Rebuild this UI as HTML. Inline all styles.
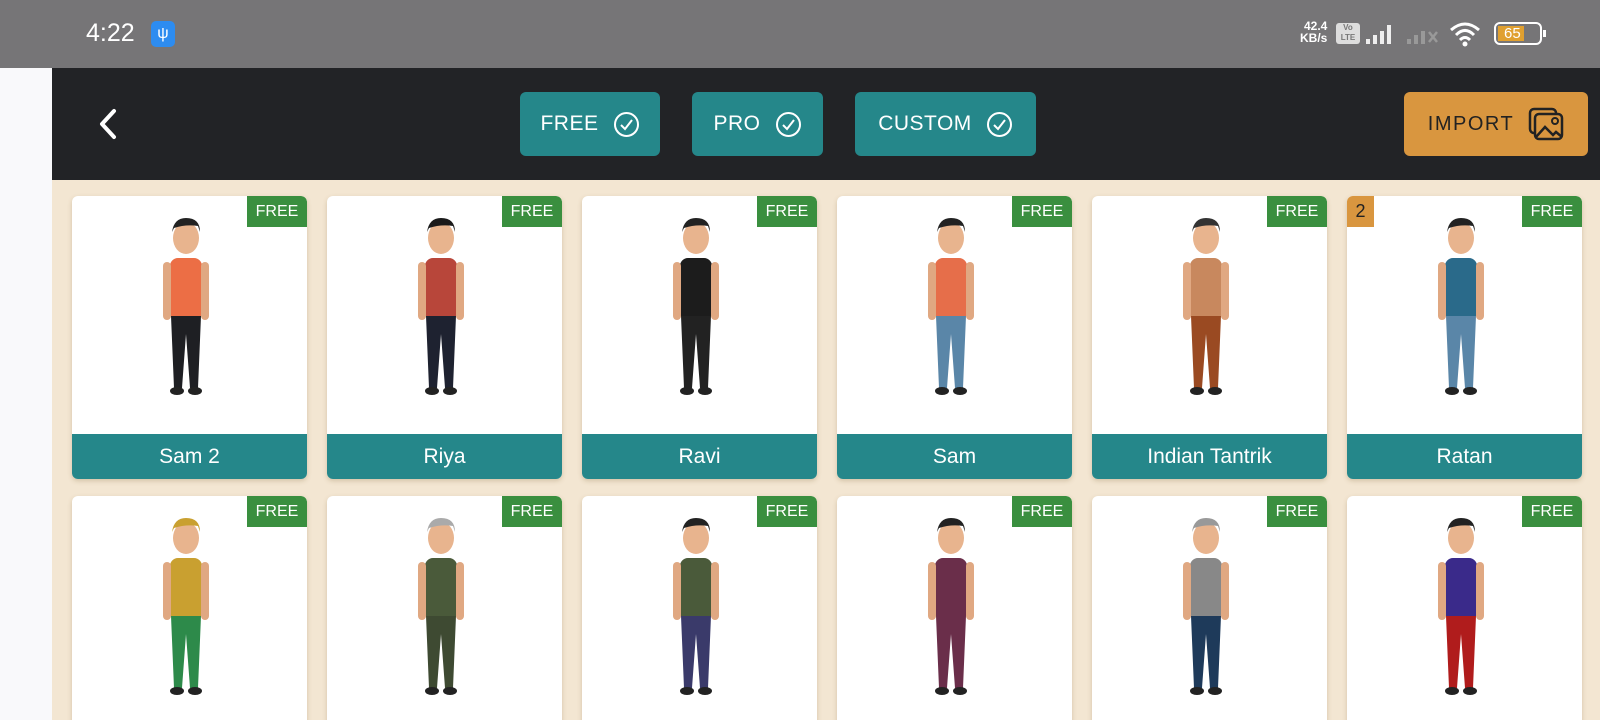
<!DOCTYPE html>
<html><head><meta charset="utf-8"><style>
*{margin:0;padding:0;box-sizing:border-box}
html,body{width:1600px;height:720px;overflow:hidden}
body{background:#f3e6d2;font-family:"Liberation Sans",Roboto,sans-serif;position:relative}
.sb{position:absolute;left:0;top:0;width:1600px;height:68px;background:#767577;color:#fff}
.left{position:absolute;left:0;top:68px;width:52px;height:652px;background:#f9f9fb}
.hdr{position:absolute;left:52px;top:68px;width:1548px;height:112px;background:#222326}
.btn{position:absolute;top:92px;height:64px;background:#25878a;border-radius:6px;color:#fff;font-size:21px;display:flex;align-items:center;justify-content:center;gap:14px;letter-spacing:.5px}
.imp{position:absolute;left:1404px;top:92px;width:184px;height:64px;background:#d9963f;border-radius:6px;color:#222;font-size:20px;display:flex;align-items:center;justify-content:center;gap:14px;letter-spacing:1.5px}
.card{position:absolute;width:235px;height:283px;background:#fff;border-radius:6px;box-shadow:0 2px 5px rgba(120,90,40,.25);overflow:hidden}
.card .nm{position:absolute;left:0;bottom:0;width:100%;height:45px;background:#25878a;color:#fff;font-size:21px;text-align:center;line-height:45px}
.card .fr{position:absolute;right:0;top:0;width:60px;height:31px;background:#3a8f3f;color:#fff;font-size:16px;text-align:center;line-height:31px;border-top-right-radius:6px}
.card .n2{position:absolute;left:0;top:0;width:27px;height:31px;background:#d9963f;color:#222;font-size:18px;text-align:center;line-height:31px}
.card svg{position:absolute;left:74px;top:14px}
</style></head><body>
<svg width="0" height="0" style="position:absolute"><defs>
<g id="fig">
<ellipse cx="40" cy="28" rx="13" ry="16" fill="#e8b48e"/>
<path d="M26 22 Q28 8 40 8 Q54 8 54 22 L52 16 Q40 14 28 18Z" fill="var(--hair)"/>
<rect x="24" y="48" width="32" height="62" rx="8" fill="var(--shirt)"/>
<rect x="17" y="52" width="8" height="58" rx="4" fill="#e0a882"/>
<rect x="55" y="52" width="8" height="58" rx="4" fill="#e0a882"/>
<path d="M25 106 L55 106 L52 178 L44 178 L40 124 L36 178 L28 178Z" fill="var(--pant)"/>
<ellipse cx="31" cy="181" rx="7" ry="4" fill="#222"/>
<ellipse cx="49" cy="181" rx="7" ry="4" fill="#222"/>
</g></defs></svg>
<div class="sb">
<div style="position:absolute;left:86px;top:19px;font-size:25px">4:22</div>
<div style="position:absolute;left:151px;top:21px;width:24px;height:26px;background:#2d8cf0;border-radius:5px;color:#fff;font-size:16px;text-align:center;line-height:26px">ψ</div>
<div style="position:absolute;left:1300px;top:20px;font-size:12px;font-weight:bold;line-height:12px;text-align:right">42.4<br>KB/s</div>
<div style="position:absolute;left:1336px;top:23px;width:24px;height:21px;background:#ddd;border-radius:3px;color:#777;font-size:8px;font-weight:bold;text-align:center;line-height:10px">Vo<br>LTE</div>
<svg style="position:absolute;left:1366px;top:22px" width="36" height="24"><rect x="0" y="17" width="4" height="5" fill="#eee"/><rect x="7" y="13" width="4" height="9" fill="#eee"/><rect x="14" y="9" width="4" height="13" fill="#eee"/><rect x="21" y="3" width="4" height="19" fill="#eee"/></svg>
<svg style="position:absolute;left:1407px;top:22px" width="36" height="24"><rect x="0" y="17" width="4" height="5" fill="#999"/><rect x="7" y="13" width="4" height="9" fill="#999"/><rect x="14" y="9" width="4" height="13" fill="#999"/><path d="M22 10 L30 20 M30 10 L22 20" stroke="#999" stroke-width="2.5"/></svg>
<svg style="position:absolute;left:1449px;top:20px" width="34" height="28"><path d="M2 10 Q16 -2 30 10 M7 15 Q16 6 25 15 M11 20 Q16 15 21 20" stroke="#fff" stroke-width="3" fill="none"/><circle cx="16" cy="24" r="2.5" fill="#fff"/></svg>
<div style="position:absolute;left:1494px;top:22px;width:48px;height:23px;border:2px solid #fff;border-radius:6px;padding:2px"><div style="width:26px;height:15px;background:#e0a030;color:#fff;font-size:15px;line-height:15px;padding-left:6px">65</div></div>
<div style="position:absolute;left:1543px;top:30px;width:3px;height:7px;background:#fff"></div>
</div>
<div class="left"></div>
<div class="hdr"></div>
<svg style="position:absolute;left:96px;top:108px" width="24" height="32"><path d="M18 3 L6 16 L18 29" stroke="#fff" stroke-width="4" fill="none" stroke-linecap="round" stroke-linejoin="round"/></svg>
<div class="btn" style="left:520px;width:140px">FREE <svg width="27" height="27"><circle cx="13.5" cy="13.5" r="11.5" stroke="#fff" stroke-width="2" fill="none"/><path d="M8 14 L12 18 L19 9" stroke="#fff" stroke-width="2" fill="none"/></svg></div>
<div class="btn" style="left:692px;width:131px">PRO <svg width="27" height="27"><circle cx="13.5" cy="13.5" r="11.5" stroke="#fff" stroke-width="2" fill="none"/><path d="M8 14 L12 18 L19 9" stroke="#fff" stroke-width="2" fill="none"/></svg></div>
<div class="btn" style="left:855px;width:181px">CUSTOM <svg width="27" height="27"><circle cx="13.5" cy="13.5" r="11.5" stroke="#fff" stroke-width="2" fill="none"/><path d="M8 14 L12 18 L19 9" stroke="#fff" stroke-width="2" fill="none"/></svg></div>
<div class="imp">IMPORT <svg width="36" height="34"><rect x="2" y="2" width="26" height="24" rx="4" stroke="#222" stroke-width="2.5" fill="none"/><rect x="7" y="7" width="27" height="25" rx="4" stroke="#222" stroke-width="2.5" fill="#d9963f"/><path d="M8 30 L17 20 L25 28 L28 25 L34 30" stroke="#222" stroke-width="2.5" fill="none"/><circle cx="27" cy="14" r="3" stroke="#222" stroke-width="2" fill="none"/></svg></div>

<div class="card" style="left:72px;top:196px"><svg width="80" height="190" style="--shirt:#ec6e45;--pant:#1e1f23;--hair:#222"><use href="#fig"/></svg><div class="fr">FREE</div><div class="nm">Sam 2</div></div>
<div class="card" style="left:327px;top:196px"><svg width="80" height="190" style="--shirt:#b8463a;--pant:#1e2230;--hair:#1a1a1a"><use href="#fig"/></svg><div class="fr">FREE</div><div class="nm">Riya</div></div>
<div class="card" style="left:582px;top:196px"><svg width="80" height="190" style="--shirt:#1c1c1c;--pant:#222;--hair:#222"><use href="#fig"/></svg><div class="fr">FREE</div><div class="nm">Ravi</div></div>
<div class="card" style="left:837px;top:196px"><svg width="80" height="190" style="--shirt:#e66e4a;--pant:#5a86a8;--hair:#222"><use href="#fig"/></svg><div class="fr">FREE</div><div class="nm">Sam</div></div>
<div class="card" style="left:1092px;top:196px"><svg width="80" height="190" style="--shirt:#c8885e;--pant:#9a4a22;--hair:#333"><use href="#fig"/></svg><div class="fr">FREE</div><div class="nm">Indian Tantrik</div></div>
<div class="card" style="left:1347px;top:196px"><svg width="80" height="190" style="--shirt:#2a6a8a;--pant:#5a86a8;--hair:#222"><use href="#fig"/></svg><div class="n2">2</div><div class="fr">FREE</div><div class="nm">Ratan</div></div>

<div class="card" style="left:72px;top:496px"><svg width="80" height="190" style="--shirt:#c9a030;--pant:#2d8a4a;--hair:#c9a030"><use href="#fig"/></svg><div class="fr">FREE</div></div>
<div class="card" style="left:327px;top:496px"><svg width="80" height="190" style="--shirt:#4a5a3a;--pant:#3e4a32;--hair:#aaa"><use href="#fig"/></svg><div class="fr">FREE</div></div>
<div class="card" style="left:582px;top:496px"><svg width="80" height="190" style="--shirt:#4a5a3a;--pant:#3a3a6a;--hair:#222"><use href="#fig"/></svg><div class="fr">FREE</div></div>
<div class="card" style="left:837px;top:496px"><svg width="80" height="190" style="--shirt:#6a2e4a;--pant:#6a2e4a;--hair:#222"><use href="#fig"/></svg><div class="fr">FREE</div></div>
<div class="card" style="left:1092px;top:496px"><svg width="80" height="190" style="--shirt:#888;--pant:#1e3a5a;--hair:#999"><use href="#fig"/></svg><div class="fr">FREE</div></div>
<div class="card" style="left:1347px;top:496px"><svg width="80" height="190" style="--shirt:#3a2a8a;--pant:#b01c1c;--hair:#222"><use href="#fig"/></svg><div class="fr">FREE</div></div>
</body></html>
